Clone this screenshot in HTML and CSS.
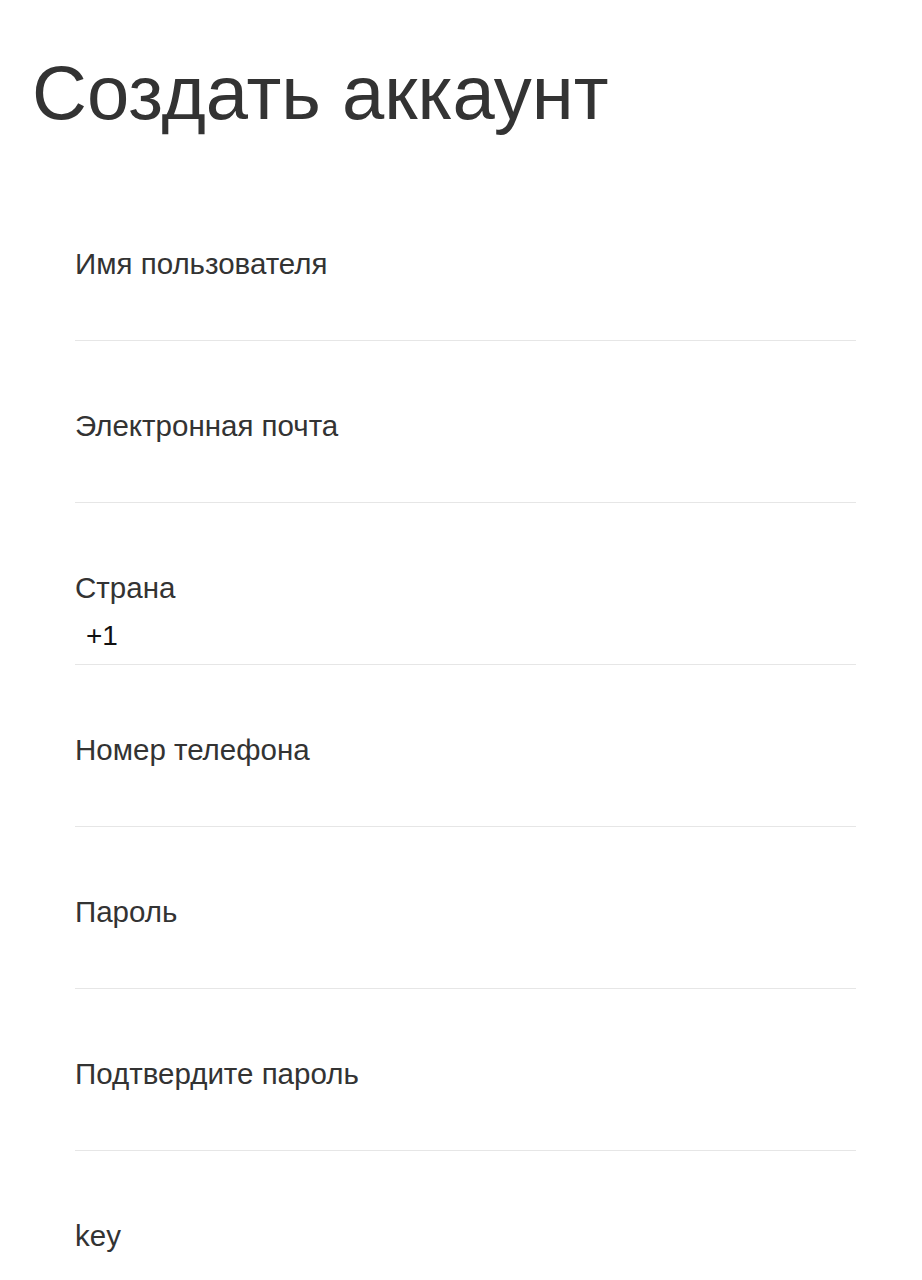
FILE: index.html
```html
<!DOCTYPE html>
<html lang="ru">
<head>
<meta charset="utf-8">
<title>Создать аккаунт</title>
<link rel="stylesheet" href="styles.css">
</head>
<body>
<h1 class="title">Создать аккаунт</h1>
<form class="form">
  <div class="field"><div class="label">Имя пользователя</div></div>
  <div class="field"><div class="label">Электронная почта</div></div>
  <div class="field"><div class="label">Страна</div><div class="value">+1</div></div>
  <div class="field"><div class="label">Номер телефона</div></div>
  <div class="field"><div class="label">Пароль</div></div>
  <div class="field"><div class="label">Подтвердите пароль</div></div>
  <div class="field"><div class="label">key</div></div>
</form>
</body>
</html>
```
FILE: styles.css
```css
html, body {
  margin: 0;
  padding: 0;
  background: #fff;
}
body {
  font-family: "Liberation Sans", Arial, sans-serif;
  color: #333;
}
.title {
  margin: 48px 0 0 32px;
  font-size: 76px;
  font-weight: 400;
  line-height: 90px;
  color: #333;
}
.form {
  margin: 41px 66px 0 75px;
  display: flex;
  flex-direction: column;
}
.field {
  height: 92px;
  padding-top: 69px;
  border-bottom: 1px solid #e6e6e6;
}
.label {
  font-size: 29.5px;
  line-height: 32px;
}
.value {
  margin-top: 16px;
  padding-left: 11px;
  font-size: 28px;
  line-height: 32px;
  color: #111;
}
```
